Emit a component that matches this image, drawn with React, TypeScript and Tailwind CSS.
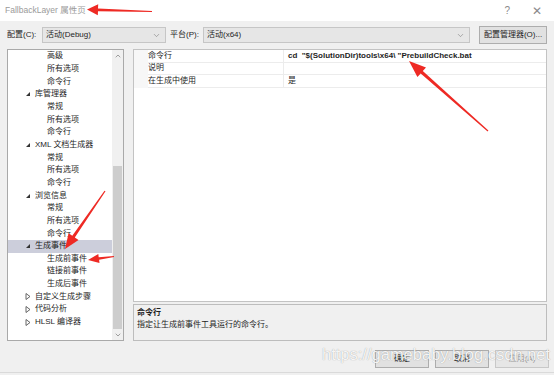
import { ChevronDown, ChevronUp } from "lucide-react";

type TreeRow = {
  level: 1 | 2;
  label: string;
  state?: "open" | "closed";
  selected?: boolean;
};

const treeRows: TreeRow[] = [
  { level: 2, label: "高级" },
  { level: 2, label: "所有选项" },
  { level: 2, label: "命令行" },
  { level: 1, label: "库管理器", state: "open" },
  { level: 2, label: "常规" },
  { level: 2, label: "所有选项" },
  { level: 2, label: "命令行" },
  { level: 1, label: "XML 文档生成器", state: "open" },
  { level: 2, label: "常规" },
  { level: 2, label: "所有选项" },
  { level: 2, label: "命令行" },
  { level: 1, label: "浏览信息", state: "open" },
  { level: 2, label: "常规" },
  { level: 2, label: "所有选项" },
  { level: 2, label: "命令行" },
  { level: 1, label: "生成事件", state: "open", selected: true },
  { level: 2, label: "生成前事件" },
  { level: 2, label: "链接前事件" },
  { level: 2, label: "生成后事件" },
  { level: 1, label: "自定义生成步骤", state: "closed" },
  { level: 1, label: "代码分析", state: "closed" },
  { level: 1, label: "HLSL 编译器", state: "closed" },
];

const props = [
  { name: "命令行", value: 'cd  "$(SolutionDir)tools\\x64\\ "PrebuildCheck.bat', bold: true },
  { name: "说明", value: "" },
  { name: "在生成中使用", value: "是" },
];

// tapered annotation arrow, tail -> tip
function arrowPoints(
  x1: number,
  y1: number,
  x2: number,
  y2: number,
  head: number,
  half: number,
  w0: number,
  w1: number
) {
  const dx = x2 - x1;
  const dy = y2 - y1;
  const len = Math.hypot(dx, dy);
  const ux = dx / len;
  const uy = dy / len;
  const nx = -uy;
  const ny = ux;
  const bx = x2 - ux * head;
  const by = y2 - uy * head;
  const pts = [
    [x1 + (nx * w0) / 2, y1 + (ny * w0) / 2],
    [bx + (nx * w1) / 2, by + (ny * w1) / 2],
    [bx + nx * half, by + ny * half],
    [x2, y2],
    [bx - nx * half, by - ny * half],
    [bx - (nx * w1) / 2, by - (ny * w1) / 2],
    [x1 - (nx * w0) / 2, y1 - (ny * w0) / 2],
  ];
  return pts.map((p) => `${p[0].toFixed(1)},${p[1].toFixed(1)}`).join(" ");
}

function Triangle({ state }: { state: "open" | "closed" }) {
  if (state === "open") {
    return (
      <svg width="6" height="6" viewBox="0 0 6 6">
        <polygon points="5,1 5,5 1,5" fill="#333" />
      </svg>
    );
  }
  return (
    <svg width="6" height="7" viewBox="0 0 6 7">
      <polygon points="1,0.5 5,3.5 1,6.5" fill="none" stroke="#555" strokeWidth="0.9" />
    </svg>
  );
}

export default function App() {
  return (
    <div className="relative h-[375px] w-[554px] overflow-hidden bg-[#f0f0f0] font-['Liberation_Sans','Noto_Sans_CJK_SC',sans-serif] text-[8px] leading-none text-[#1e1e1e]">
      {/* title bar */}
      <div className="flex h-[21px] items-center justify-between bg-white pl-[5px] pr-[12px]">
        <span className="text-[8.5px] text-[#9a9a9a]">FallbackLayer 属性页</span>
        <div className="flex items-center gap-[22px] text-[10px] text-[#8a8a8a]">
          <span>?</span>
          <span className="text-[12px]">✕</span>
        </div>
      </div>

      {/* configuration row */}
      <div className="mt-[5px] flex h-[18px] items-center pl-[7px]">
        <span className="w-[35px]">配置(C):</span>
        <div className="flex h-[16px] w-[124px] items-center justify-between border border-[#c6c6c6] bg-[#e6e6e6] pl-[3px] pr-[4px]">
          <span>活动(Debug)</span>
          <ChevronDown size={9} strokeWidth={1.5} className="text-[#777]" />
        </div>
        <span className="ml-[4px] w-[33px]">平台(P):</span>
        <div className="flex h-[16px] w-[267px] items-center justify-between border border-[#c6c6c6] bg-[#e6e6e6] pl-[3px] pr-[4px]">
          <span>活动(x64)</span>
          <ChevronDown size={9} strokeWidth={1.5} className="text-[#777]" />
        </div>
        <div className="ml-[9px] flex h-[18px] w-[68px] items-center justify-center border border-[#adadad] bg-[#e1e1e1]">
          配置管理器(O)...
        </div>
      </div>

      {/* main panels */}
      <div className="mt-[5px] flex h-[292px] gap-[9px] pl-[7px]">
        <div className="flex w-[117px] border border-[#a9a9a9] bg-white">
          <div className="flex-1">
            {treeRows.map((row, i) => (
              <div
                key={i}
                className={
                  "flex h-[12.67px] items-center " +
                  (row.level === 1 ? "pl-[17px] " : "pl-[39px] ") +
                  (row.selected ? "bg-[#cccedb]" : "")
                }
              >
                {row.state && (
                  <span className="flex w-[10px] items-center">
                    <Triangle state={row.state} />
                  </span>
                )}
                <span>{row.label}</span>
              </div>
            ))}
          </div>
          <div className="flex w-[11px] flex-col items-center bg-[#f0f0f0]">
            <ChevronUp size={8} strokeWidth={1.6} className="mt-[2px] text-[#555]" />
            <div className="mt-[106px] h-[163px] w-[9px] bg-[#cdcdcd]" />
            <ChevronDown size={8} strokeWidth={1.6} className="mt-[2px] text-[#555]" />
          </div>
        </div>

        <div className="flex w-[414px] flex-col gap-[2px]">
          <div className="h-[253px] border border-[#c3c3c3] bg-white">
            {props.map((p) => (
              <div key={p.name} className="flex h-[12.5px]">
                <div className="w-[14px] bg-[#f7f7f7]" />
                <div className="flex flex-1 border-b border-[#ececec]">
                  <div className="flex w-[136px] items-center border-r border-[#ececec]">{p.name}</div>
                  <div className={"flex items-center whitespace-pre pl-[4px] " + (p.bold ? "font-bold" : "")}>{p.value}</div>
                </div>
              </div>
            ))}
          </div>
          <div className="h-[37px] border border-[#bdbdbd] bg-[#f0f0f0] pl-[3px] pt-[4px]">
            <div className="font-bold">命令行</div>
            <div className="mt-[4px]">指定让生成前事件工具运行的命令行。</div>
          </div>
        </div>
      </div>

      {/* buttons */}
      <div className="mt-[9px] flex justify-end gap-[6px] pr-[5px]">
        <div className="flex h-[18px] w-[54px] items-center justify-center border border-[#adadad] bg-[#e1e1e1]">确定</div>
        <div className="flex h-[18px] w-[54px] items-center justify-center border border-[#adadad] bg-[#e1e1e1]">取消</div>
        <div className="flex h-[18px] w-[54px] items-center justify-center border border-[#c8c8c8] bg-[#e6e6e6] text-[#9a9a9a]">应用(A)</div>
      </div>
      <div className="mt-[4px] border-t border-[#dadada]" />

      {/* watermark */}
      <div className="pointer-events-none absolute left-[322px] top-[346px] font-['Liberation_Sans',sans-serif] text-[16.5px] text-white/90 [text-shadow:0_0_1px_rgba(0,0,0,0.4)]">
        https://gamebaby.blog.csdn.net
      </div>

      {/* red annotation arrows */}
      <svg className="pointer-events-none absolute left-0 top-0" width="554" height="375">
        <g fill="#ee2a24">
          <polygon points={arrowPoints(152, 11.5, 87, 9.5, 11, 5.5, 1, 2.8)} />
          <polygon points={arrowPoints(488, 131, 409, 61, 17, 6.5, 1.2, 3.2)} />
          <polygon points={arrowPoints(105, 191, 65, 249, 15, 6, 1.2, 3)} />
          <polygon points={arrowPoints(114, 256.5, 88, 260, 11, 4.5, 1, 2.6)} />
        </g>
      </svg>
    </div>
  );
}
